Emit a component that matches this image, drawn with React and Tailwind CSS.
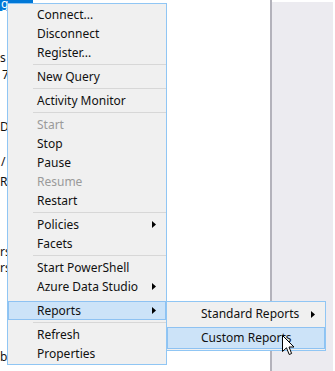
import { Fragment } from "react";

const font = { fontFamily: '"Noto Sans", "Liberation Sans", sans-serif' };

const menuItems = [
  { label: "Connect..." },
  { label: "Disconnect" },
  { label: "Register..." },
  { sep: true },
  { label: "New Query" },
  { sep: true },
  { label: "Activity Monitor" },
  { sep: true },
  { label: "Start", disabled: true },
  { label: "Stop" },
  { label: "Pause" },
  { label: "Resume", disabled: true },
  { label: "Restart" },
  { sep: true },
  { label: "Policies", sub: true },
  { label: "Facets" },
  { sep: true },
  { label: "Start PowerShell" },
  { label: "Azure Data Studio", sub: true },
  { gap: true },
  { label: "Reports", sub: true, active: true },
  { sep: true },
  { label: "Refresh" },
  { label: "Properties" },
];

function Arrow() {
  return (
    <svg width="4" height="7" viewBox="0 0 4 7" className="shrink-0">
      <path d="M0 0 L4 3.5 L0 7 Z" fill="#000" />
    </svg>
  );
}

function MenuRow({ item }) {
  if (item.sep) {
    return (
      <div className="h-[5px] flex items-center">
        <div className="ml-[25px] flex-1 h-px bg-[#d7d7d7]" />
      </div>
    );
  }
  if (item.gap) return <div className="h-[5px]" />;
  return (
    <div
      className={`h-[19px] flex items-center pl-[28px] pr-[9px] border ${
        item.active ? "bg-[#cce3f8] border-[#8ec2f2]" : "border-transparent"
      }`}
    >
      <span
        className={`flex-1 text-[12px] leading-none ${
          item.disabled ? "text-[#9a9a9a]" : "text-[#111]"
        }`}
      >
        {item.label}
      </span>
      {item.sub && <Arrow />}
    </div>
  );
}

const treeBits = [
  { t: "s", mt: "mt-[39px]" },
  { t: "7", mt: "mt-[1px]", pl: "pl-[2px]" },
  { t: "DE", mt: "mt-[36px]" },
  { t: "/", mt: "mt-[19px]", pl: "pl-[1px]" },
  { t: "R", mt: "mt-[4px]" },
  { t: "rs", mt: "mt-[54px]" },
  { t: "rs", mt: "mt-[0px]" },
  { t: "b", mt: "mt-[73px]" },
];

export default function App() {
  return (
    <div className="relative w-[335px] h-[371px] bg-white overflow-hidden flex" style={font}>
      {/* tree view behind the menu */}
      <div className="w-[270px] flex flex-col">
        <div className="h-[11px] w-[33px] bg-[#0078d7] text-white text-[12px] leading-[8px] pl-[1px] overflow-hidden">
          g
        </div>
        {treeBits.map((b, i) => (
          <div
            key={i}
            className={`h-[16px] text-[12px] leading-[16px] text-[#111] ${b.mt} ${b.pl || ""}`}
          >
            {b.t}
          </div>
        ))}
      </div>
      <div className="w-[2px] bg-[#b3b2bb]" />
      <div className="flex-1 mt-[2px] mr-[2px] bg-[#ecebf0]" />

      {/* context menu */}
      <div className="absolute left-[7px] top-[3px] w-[160px] bg-[#f0f0f0] border border-[#90c6f4] flex flex-col py-[1px]">
        {menuItems.map((item, i) => (
          <Fragment key={i}>
            <MenuRow item={item} />
          </Fragment>
        ))}
      </div>

      {/* submenu */}
      <div className="absolute left-[166px] top-[301px] w-[160px] bg-[#f0f0f0] border border-[#90c6f4] flex flex-col py-[1px]">
        <div className="h-[22px] flex items-center pl-[33px] pr-[9px] border border-transparent">
          <span className="flex-1 text-[12px] leading-none text-[#111]">Standard Reports</span>
          <Arrow />
        </div>
        <div className="h-[2px]" />
        <div className="h-[22px] flex items-center pl-[33px] pr-[9px] border bg-[#cce3f8] border-[#8ec2f2]">
          <span className="flex-1 text-[12px] leading-none text-[#111]">Custom Reports</span>
        </div>
      </div>

      {/* mouse pointer */}
      <svg
        className="absolute left-[282px] top-[335px]"
        width="13"
        height="21"
        viewBox="0 0 13 21"
      >
        <path
          d="M0.5 0.5 L0.5 16.5 L4.5 12.8 L7.2 19.5 L9.6 18.5 L7 12 L12 12 Z"
          fill="#fff"
          stroke="#000"
          strokeWidth="1"
          strokeLinejoin="round"
        />
      </svg>
    </div>
  );
}
